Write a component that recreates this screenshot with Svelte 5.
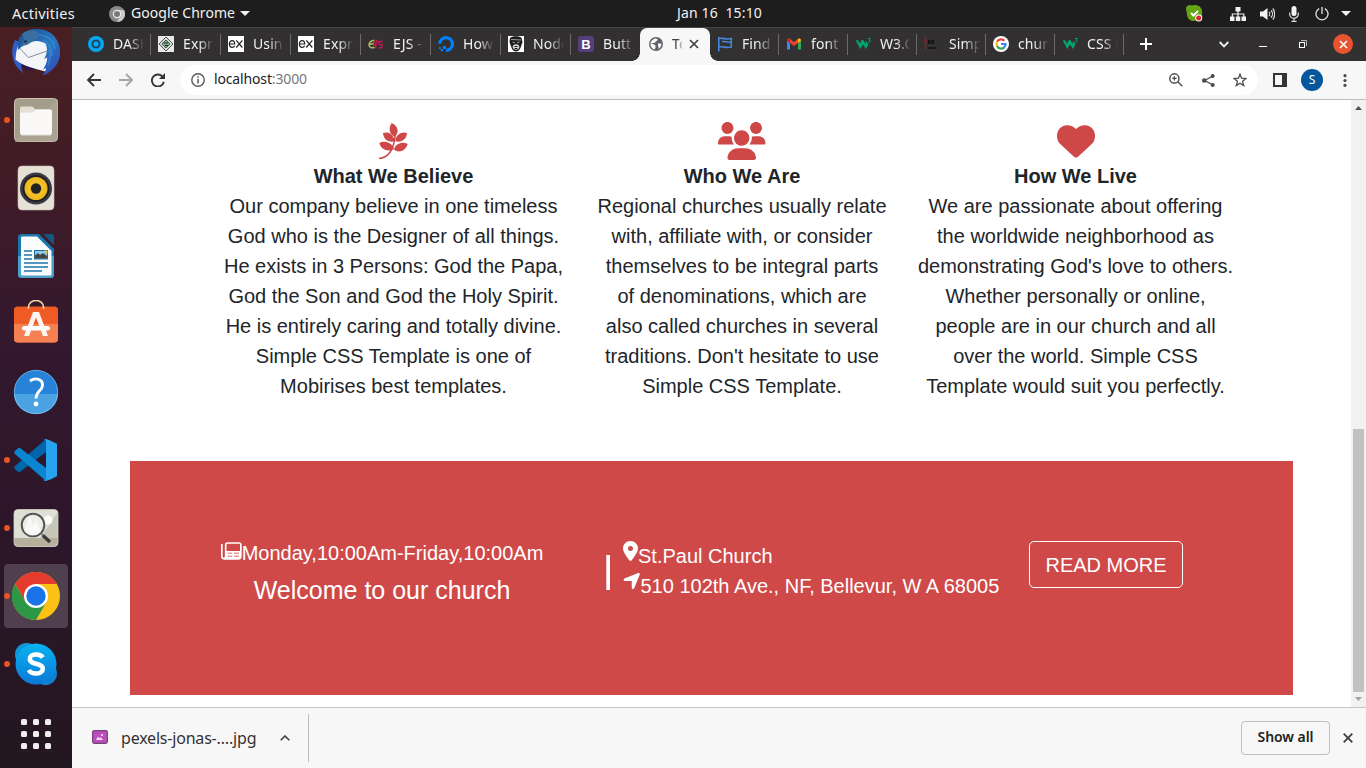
<script>
  const tabsLeft = [
    { icon: 'ring', label: 'DASH' },
    { icon: 'diamond', label: 'Expr' },
    { icon: 'ex', label: 'Usin' },
    { icon: 'ex', label: 'Expr' },
    { icon: 'ejs', label: 'EJS -' },
    { icon: 'ocean', label: 'How' },
    { icon: 'monkey', label: 'Node' },
    { icon: 'boot', label: 'Butt' }
  ];
  const tabsRight = [
    { icon: 'flag', label: 'Find' },
    { icon: 'gmail', label: 'font' },
    { icon: 'w3', label: 'W3.C' },
    { icon: 'simple', label: 'Simp' },
    { icon: 'google', label: 'chur' },
    { icon: 'w3', label: 'CSS L' }
  ];
  const dock = [
    { icon: 'thunderbird' },
    { icon: 'files', dot: true },
    { icon: 'rhythmbox' },
    { icon: 'writer' },
    { icon: 'software' },
    { icon: 'help' },
    { icon: 'code', dot: true },
    { icon: 'viewer', dot: true },
    { icon: 'chrome', dot: true, active: true },
    { icon: 'skype', dot: true }
  ];
  const columns = [
    {
      icon: 'leaf',
      title: 'What We Believe',
      lines: [
        'Our company believe in one timeless',
        'God who is the Designer of all things.',
        'He exists in 3 Persons: God the Papa,',
        'God the Son and God the Holy Spirit.',
        'He is entirely caring and totally divine.',
        'Simple CSS Template is one of',
        'Mobirises best templates.'
      ]
    },
    {
      icon: 'users',
      title: 'Who We Are',
      lines: [
        'Regional churches usually relate',
        'with, affiliate with, or consider',
        'themselves to be integral parts',
        'of denominations, which are',
        'also called churches in several',
        "traditions. Don't hesitate to use",
        'Simple CSS Template.'
      ]
    },
    {
      icon: 'heart',
      title: 'How We Live',
      lines: [
        'We are passionate about offering',
        'the worldwide neighborhood as',
        "demonstrating God's love to others.",
        'Whether personally or online,',
        'people are in our church and all',
        'over the world. Simple CSS',
        'Template would suit you perfectly.'
      ]
    }
  ];
</script>

{#snippet favicon(name)}
  <svg class="fav" viewBox="0 0 16 16" width="16" height="16">
    {#if name === 'ring'}
      <circle cx="8" cy="8" r="8" fill="#00a8f5" />
      <circle cx="8" cy="8" r="3.600" fill="none" stroke="#253b48" stroke-width="1.700" />
    {:else if name === 'diamond'}
      <rect width="16" height="16" fill="#e9e9e9" />
      <path d="M8 1L15 8L8 15L1 8Z" fill="#d5dcd6" stroke="#555" stroke-width="1" />
      <path d="M8 4L12 8L8 12L4 8Z" fill="#8fae96" stroke="#3c5c46" stroke-width="1" />
      <path d="M6 7h4M7 9.500h3" stroke="#223" stroke-width="1.100" />
    {:else if name === 'ex'}
      <rect width="16" height="16" fill="#fff" />
      <path d="M1.400 8h5.300c0-2.400-1-3.400-2.600-3.400S1.400 5.900 1.400 8s1 3.400 2.700 3.400c1.200 0 2.100-.6 2.500-1.700M8.300 4.400l6 7.100M14.400 4.400l-6.200 7.100" fill="none" stroke="#222" stroke-width="1.200" />
    {:else if name === 'ejs'}
      <path d="M6.500 4.500C3.500 4 1 6.500 1 8.700s2.500 4 5.500 2.600M1.500 8.500l4.500-1" fill="none" stroke="#a9bd5e" stroke-width="1.500" />
      <path d="M8.800 3.500L7.500 12.500M4.500 6.500l10-1.200M11.500 5.500l-.3 3 3 .4-.6 2.800-3.200.3M5 9l3-.5" fill="none" stroke="#c5174c" stroke-width="1.400" />
    {:else if name === 'ocean'}
      <path d="M8 14.400A6.400 6.400 0 1 0 1.700 7.700" fill="none" stroke="#0080ff" stroke-width="3.100" />
      <path d="M5 10h3v3H5zM2.800 13H5v2.200H2.800zM1 11h1.800v1.900H1z" fill="#0080ff" />
    {:else if name === 'monkey'}
      <rect width="16" height="16" fill="#fff" />
      <path d="M2 2C4-.5 12-.5 13.500 2L14.500 6L12.500 12C10.500 16.500 6 16.500 4 13L1.500 6Z" fill="#1b1b1b" />
      <ellipse cx="8" cy="11" rx="3.300" ry="2.800" fill="#d5d5d5" />
      <path d="M4.500 6.200l2.500.5M9 6.700l2.500-.5M3 3.500l10 .5" stroke="#aaa" stroke-width=".9" />
      <path d="M6.500 10.500h3M6.500 12.500h3" stroke="#222" />
    {:else if name === 'boot'}
      <rect width="16" height="16" rx="2.500" fill="#563d7c" />
      <text x="8" y="12.600" text-anchor="middle" font-family="Liberation Sans" font-weight="700" font-size="13" fill="#fff">B</text>
    {:else if name === 'flag'}
      <path d="M1.800 1v14.500M1.800 2.500c4-1 8 1.500 12.500 0v8.500C10 12.500 6 10 1.800 11M5 5.500c3-.5 5 1.500 9 .5" fill="none" stroke="#4387d8" stroke-width="1.600" />
    {:else if name === 'gmail'}
      <path d="M1 4v9.500h3V7.200z" fill="#4285f4" />
      <path d="M15 4v9.500h-3V7.200z" fill="#34a853" />
      <path d="M1 4.500C1 2.500 3 2 4.200 3L8 6l3.800-3C13 2 15 2.500 15 4.500L8 10z" fill="#ea4335" />
      <path d="M12 3l1-.6c1 0 2 .8 2 2.100L12 7z" fill="#fbbc04" />
      <path d="M1 4.500C1 3 2 2.300 3 2.500L4 3v4z" fill="#c5221f" />
    {:else if name === 'w3'}
      <path d="M.8 4.200h2.500l1.600 3.600 1.600-3.600h2.200l1.600 3.600L11.500 5 13.500 8.500 11 13 8 8.500 5.200 13z" fill="#04a56b" />
      <path d="M13 2.500h2.300l-1.300 1.600c2 0 1.600 2.500-.9 2.200" fill="none" stroke="#04a56b" stroke-width="1" />
    {:else if name === 'simple'}
      <path d="M1.500 1v13M0 5.200h3.500" stroke="#8f2029" stroke-width="1.300" />
      <path d="M4.500 4v4M6 4v4M8 4v4M9.500 4v4" stroke="#111" stroke-width="1.200" />
      <path d="M4 12h8" stroke="#151515" stroke-width="1.600" />
    {:else if name === 'google'}
      <circle cx="8" cy="8" r="8" fill="#fff" />
      <path d="M4 5.800A4.600 4.600 0 0 1 11.400 4.800" fill="none" stroke="#ea4335" stroke-width="2.200" />
      <path d="M4 10.200A4.600 4.600 0 0 1 4 5.800" fill="none" stroke="#fbbc05" stroke-width="2.200" />
      <path d="M11.200 11.400A4.600 4.600 0 0 1 4 10.100" fill="none" stroke="#34a853" stroke-width="2.200" />
      <path d="M8 8h4.600A4.600 4.600 0 0 1 11 11.500" fill="none" stroke="#4285f4" stroke-width="2.200" />
    {/if}
  </svg>
{/snippet}

{#snippet tab(t)}
  <div class="tab">
    {@render favicon(t.icon)}
    <span class="tab-label">{t.label}</span>
  </div>
{/snippet}

{#snippet dockIcon(name)}
  <svg viewBox="0 0 48 48" width="48" height="48">
    {#if name === 'thunderbird'}
      <defs>
        <linearGradient id="tb" x1="0" y1="0" x2="1" y2="1"><stop offset="0" stop-color="#1b4a8e" /><stop offset=".55" stop-color="#2879c2" /><stop offset="1" stop-color="#3440b4" /></linearGradient>
      </defs>
      <path d="M3 12C-2 22-1 37 12 45.500C9.500 42 9 40 9.500 37L14 40L12 30L8 14Z" fill="#2f5fc6" />
      <path d="M8 33l16 7c-2 2-6 2.500-9 1.500-3-1-6-4-7-8.500z" fill="#26124e" />
      <path d="M7 15C8 12 30 11 36 14C38 24 37 33 33.500 43.500C24 41 10 38 3.500 31.500C4 24 5 19 7 15Z" fill="#f3f4f8" />
      <path d="M6.500 19L16.500 29.500L35 23" fill="none" stroke="#858c98" stroke-width="1" />
      <path d="M9 7C17-1 34-1 42 8C49 16 50 28 45 36C41 42 36 46 30 47.500C33 44.500 34 42.500 34 40L31 41.500C34 37 35.500 33 35 29.500L32 31C35 26 36 21 33.500 15.500C28 12 20 12 15.500 16C11 17 9 19 6 22C5 17 6 11 9 7Z" fill="url(#tb)" />
      <path d="M10 6C18 0 26 1 27 7C26 12 20 13 15 17C12 17 10 19 8 19C12 14 13 10 10 6Z" fill="#3b6f9f" />
      <path d="M27 7c9 1 15 6 16 14M31 12c6 3 9 9 9 16M37 22c2 5 1 10-1 15" fill="none" stroke="#3c9bd8" stroke-width="1.600" opacity=".55" />
      <circle cx="13.500" cy="13.500" r="1.200" fill="#2c2018" />
    {:else if name === 'files'}
      <rect x="2.500" y="2.500" width="43" height="43" rx="4" fill="#a49d8b" stroke="#c9c3b3" />
      <path d="M2.500 46L46 2.500V41c0 3-2 4.500-4 4.500z" fill="#b2aa97" opacity=".5" />
      <path d="M8 12.500c0-1.500 1-2 2-2h10c2 0 2 3 4 3h14c1.500 0 2 1 2 2v21c0 2-1 3-2 3H10c-1 0-2-1-2-3z" fill="#e3dfd5" />
      <path d="M8 18.500c0-1.500 1-2 3-2h9c2 0 2.500-3 4.500-3H38c1.500 0 2 1 2 2v20c0 2-1 3-2 3H10c-1 0-2-1-2-3z" fill="#faf9f8" />
    {:else if name === 'rhythmbox'}
      <rect x="6" y="2" width="36" height="44" rx="4" fill="#e6e1d6" stroke="#c5bdac" stroke-width=".6" />
      <circle cx="24" cy="24.500" r="16" fill="#3a3a44" />
      <circle cx="24" cy="24.500" r="13.500" fill="#202024" />
      <circle cx="24" cy="24.500" r="11.500" fill="#edb820" />
      <circle cx="24" cy="24.500" r="9" fill="#f7ca34" opacity=".5" />
      <circle cx="24" cy="24.500" r="5.200" fill="#222225" />
    {:else if name === 'writer'}
      <path d="M6 6c0-3 1-4 4-4h17l15 15v25c0 3-1 4-4 4H10c-3 0-4-1-4-4z" fill="#1b76aa" />
      <path d="M6 24h36v18c0 3-1 4-4 4H10c-3 0-4-1-4-4z" fill="#4d9fc9" />
      <path d="M9 6c0-1 .5-1.500 1.500-1.500H25L39.500 19v23c0 1-.5 1.500-1.500 1.500H10.500c-1 0-1.500-.5-1.500-1.500z" fill="#fbfbfb" />
      <path d="M31 2h9c1.500 0 2 1 2 2v9z" fill="#115981" />
      <path d="M12 19h8M12 23h8M12 27h8M12 31h24M12 35h24M12 39h18" stroke="#1c77ab" stroke-width="1.700" />
      <rect x="22.500" y="18.500" width="13" height="8.500" fill="#8cc9ed" stroke="#1b6fa0" />
      <path d="M23 26.500v-3l3-2.500 2 2 3-2 4 3v2.500z" fill="#484541" /><path d="M32 18.500h3.500V22z" fill="#f2bf3a" />
    {:else if name === 'software'}
      <path d="M2 10c0-2 1-3.500 4-3.500h36c3 0 4 1.500 4 3.500v28c0 3-1 4.500-4 4.500H6c-3 0-4-1.500-4-4.500z" fill="#ef5b24" />
      <path d="M2 24h44v14c0 3-1 4.500-4 4.500H6c-3 0-4-1.500-4-4.500z" fill="#f58052" />
      <path d="M16.500 9V7a7.500 6.500 0 0 1 15 0v2" fill="none" stroke="#f4d3a4" stroke-width="1.600" />
      <path d="M21 12h6l9 24h-5l-7-18.500L17 36h-5z" fill="#fff" opacity=".93" />
      <rect x="10" y="26" width="28" height="4.500" rx="2.200" fill="#fff" />
    {:else if name === 'help'}
      <circle cx="24" cy="24" r="22" fill="#2783d7" />
      <path d="M2 26h44a22 20 0 0 1-44 0z" fill="#4ba2e2" />
      <circle cx="24" cy="24" r="21.700" fill="none" stroke="#8ecdf1" stroke-width=".6" />
      <path d="M18 13c5.500-4 13-2 12.500 4.500c-.5 5.500-6.500 5.500-6.500 13" fill="none" stroke="#fff" stroke-width="2.900" />
      <circle cx="24" cy="36" r="2.400" fill="#fff" />
    {:else if name === 'code'}
      <path d="M3 30L34 3v13L8 36c-1 .7-2 0-5-3-1-1-1-2 0-3z" fill="#0065a9" />
      <path d="M3 18L34 45V32L8 12c-1-.7-2 0-5 3-1 1-1 2 0 3z" fill="#0a86d1" />
      <path d="M34 3c1 0 10 4 11 5v32c-1 1-10 5-11 5-1 0-2-.5-3-1.500 2 1 3 .5 3-1.500V6c0-2-1-2.500-3-1.500C32 3.500 33 3 34 3z" fill="#27a3f0" />
    {:else if name === 'viewer'}
      <rect x="2" y="5.500" width="44" height="37" rx="4" fill="#e0dfd6" />
      <path d="M28 34L46 8v26z" fill="#c7c4b8" />
      <path d="M2 34h44v4.500c0 2.500-1 4-4 4H6c-3 0-4-1.500-4-4z" fill="#b4b09c" />
      <circle cx="36" cy="16" r="4.500" fill="#fafaf7" />
      <circle cx="21" cy="21" r="11.300" fill="#f0f0eb" fill-opacity=".9" stroke="#555" stroke-width="2" />
      <path d="M12 27l6-15 3 9 3-5 5 12a11 11 0 0 1-17-1z" fill="#fff" opacity=".6" />
      <path d="M29.500 30l3 3" stroke="#777" stroke-width="2" /><path d="M31 31.500l7 6.500" stroke="#3a3a3a" stroke-width="3.300" />
      <rect x="2" y="5.500" width="44" height="37" rx="4" fill="none" stroke="#d3d0c6" stroke-width=".8" />
    {:else if name === 'chrome'}
      <circle cx="24" cy="24" r="24" fill="#fbc116" />
      <path d="M24 12H44.800A24 24 0 0 0 3.200 12L13.600 30z" fill="#e33b2e" />
      <path d="M34.400 30L24 48A24 24 0 0 1 3.200 12L13.600 30z" fill="#2b9747" />
      <circle cx="24" cy="24" r="12" fill="#fff" />
      <circle cx="24" cy="24" r="9.700" fill="#1a73e8" />
    {:else if name === 'skype'}
      <defs><linearGradient id="sk" x1="0" y1="0" x2="0" y2="1"><stop offset="0" stop-color="#08b3f2" /><stop offset="1" stop-color="#0b78d7" /></linearGradient></defs>
      <circle cx="14.500" cy="14.500" r="11.500" fill="#1295d8" />
      <circle cx="33.500" cy="33.500" r="11.500" fill="#0f7fce" />
      <circle cx="24" cy="24" r="20.500" fill="url(#sk)" />
      <path d="M30.800 17.500C28.500 13.500 17.800 13 17.800 19c0 6 13 3.500 13 9.800c0 6-11.500 6-14 1.200" fill="none" stroke="#fff" stroke-width="4.600" />
    {/if}
  </svg>
{/snippet}

<div class="desktop">
  <header class="topbar">
    <span class="activities">Activities</span>
    <svg class="app-ic" width="16" height="16" viewBox="0 0 16 16"><circle cx="8" cy="8" r="8" fill="#8a8a8a" /><path d="M8 4h7A8 8 0 0 1 8 16l3.500-6z" fill="#c9c9c9" /><circle cx="8" cy="8" r="4.200" fill="#eee" /><circle cx="8" cy="8" r="3" fill="#777" /></svg>
    <span class="app-name">Google Chrome</span>
    <svg class="tri" width="10" height="5" viewBox="0 0 10 5"><path d="M0 0h10L5 5z" fill="#f2f2f2" /></svg>
    <span class="clock">Jan 16&nbsp; 15:10</span>
    <div class="tray">
      <svg width="17" height="17" viewBox="0 0 17 17"><path d="M0 4C0 1 2 0 4 0c2 1 3 0 5 0c5 0 8 4 7 9c1 4-1 7-4 7c-2-1-3 0-5 0c-4 0-6-4-6-7z" fill="#65a515" /><path d="M5 8l2.500 2.500L12 6" fill="none" stroke="#fff" stroke-width="2" /><circle cx="12.700" cy="13" r="3.500" fill="#fff" /><circle cx="12.700" cy="13" r="2.500" fill="#e0202a" /></svg>
      <svg class="t2" width="16" height="14" viewBox="0 0 16 14"><path d="M5.500 0h5v4.500h-5zM0 9.500h4.500V14H0zM5.800 9.500h4.500V14H5.800zM11.500 9.500H16V14h-4.500z" fill="#f2f2f2" /><path d="M8 4v6M2.300 10V7h11.500v3" fill="none" stroke="#f2f2f2" stroke-width="1.200" /></svg>
      <svg class="t3" width="15" height="14" viewBox="0 0 15 14"><path d="M0 4.500h3L7.500 1v12L3 9.500H0z" fill="#f2f2f2" /><path d="M9 5c1 1 1 3 0 4M11 3.500c2 2 2 5 0 7M12.800 1.500c2.500 3 2.500 8 0 11" fill="none" stroke="#ddd" stroke-width="1.200" /></svg>
      <svg class="t4" width="10" height="16" viewBox="0 0 10 16"><rect x="2.500" y="0" width="5" height="10" rx="2.500" fill="#f2f2f2" /><path d="M.7 6.500v1.500a4.300 4.300 0 0 0 8.600 0V6.500M5 12v3M2.500 15.400h5" fill="none" stroke="#ddd" stroke-width="1.200" /></svg>
      <svg class="t5" width="14" height="14" viewBox="0 0 14 14"><path d="M4.200 1.600a6 6 0 1 0 5.600 0M7 0v7" fill="none" stroke="#e6e6e6" stroke-width="1.300" /></svg>
      <svg class="t6" width="10" height="5" viewBox="0 0 10 5"><path d="M0 0h10L5 5z" fill="#f2f2f2" /></svg>
    </div>
  </header>

  <div class="body">
    <nav class="dock">
      {#each dock as d}
        <div class="dock-cell" class:active={d.active}>
          {#if d.dot}<i class="dot"></i>{/if}
          {@render dockIcon(d.icon)}
        </div>
      {/each}
      <div class="grid-dots">
        {#each Array(9) as _}<i></i>{/each}
      </div>
    </nav>

    <main class="window">
      <div class="tabstrip">
        <div class="tabs left">{#each tabsLeft as t}{@render tab(t)}{/each}</div>
        <div class="tab-active">
          <svg width="14" height="14" viewBox="0 0 14 14"><circle cx="7" cy="7" r="7" fill="#5f6368" /><path d="M7 1.500c2 .5 2 1.500 1 2.200C6.500 4 7 5.500 5 6H2c2 1 3.500 1.500 4.500 2.500V11c-1 1-1 1.500 0 1.500C3 12.300 1.500 9.500 1.500 7 1.500 4 4 1.500 7 1.500zM9 6.500h3.500c0 3-1.500 4.500-3 5.500.5-1.500 0-2.500-.5-3z" fill="#f7f7f7" /></svg>
          <span class="tab-label">Te</span>
          <svg class="x" width="10" height="10" viewBox="0 0 10 10"><path d="M1 1l8 8M9 1L1 9" stroke="#3c4043" stroke-width="1.700" /></svg>
        </div>
        <div class="tabs right">{#each tabsRight as t}{@render tab(t)}{/each}</div>
        <svg class="plus" width="12" height="12" viewBox="0 0 12 12"><path d="M6 0v12M0 6h12" stroke="#fff" stroke-width="2" /></svg>
        <div class="winctl">
          <svg width="10" height="7" viewBox="0 0 10 7"><path d="M.7 1l4.300 4.300L9.300 1" fill="none" stroke="#eee" stroke-width="1.900" /></svg>
          <svg class="min" width="8" height="2" viewBox="0 0 8 2"><path d="M0 .5h8" stroke="#fff" /></svg>
          <svg class="res" width="8" height="8" viewBox="0 0 8 8"><path d="M2 .5h5.500V6" fill="none" stroke="#bbb" /><rect x=".5" y="2.500" width="5" height="5" fill="none" stroke="#fff" /></svg>
          <span class="close"><svg width="9" height="9" viewBox="0 0 9 9"><path d="M1 1l7 7M8 1L1 8" stroke="#fff" stroke-width="1.500" /></svg></span>
        </div>
      </div>

      <div class="toolbar">
        <svg class="back" width="16" height="14" viewBox="0 0 16 14"><path d="M8 1L2 7l6 6M2 7h13" fill="none" stroke="#333538" stroke-width="1.900" /></svg>
        <svg class="fwd" width="16" height="14" viewBox="0 0 16 14"><path d="M8 1l6 6-6 6M14 7H1" fill="none" stroke="#a5a5a5" stroke-width="1.900" /></svg>
        <svg class="reload" width="14" height="14" viewBox="0 0 14 14"><path d="M12 4.300A6 6 0 1 0 12.800 8.700" fill="none" stroke="#333538" stroke-width="1.900" /><path d="M14 0v6H8z" fill="#333538" /></svg>
        <div class="omnibox">
          <svg width="14" height="14" viewBox="0 0 14 14"><circle cx="7" cy="7" r="6.200" fill="none" stroke="#55585c" stroke-width="1.400" /><path d="M7 6v4.500M7 3.300v1.500" stroke="#55585c" stroke-width="1.500" /></svg>
          <span class="url">localhost<span>:3000</span></span>
          <svg class="o1" width="14" height="14" viewBox="0 0 14 14"><circle cx="5.400" cy="5.400" r="4.600" fill="none" stroke="#46494d" stroke-width="1.400" /><path d="M8.800 8.800l4.500 4.500M3.300 5.400h4.200M5.400 3.300v4.200" stroke="#46494d" stroke-width="1.300" /></svg>
          <svg class="o2" width="13" height="13" viewBox="0 0 13 13"><path d="M10.500 2.200L2.500 6.500l8 4.300" fill="none" stroke="#46494d" stroke-width="1.300" /><g fill="#46494d"><circle cx="10.700" cy="2" r="2" /><circle cx="2.200" cy="6.500" r="2.200" /><circle cx="10.700" cy="11" r="2" /></g></svg>
          <svg class="o3" width="14" height="14" viewBox="0 0 14 14"><path d="M7 1.200l1.600 4 4.400.3-3.400 2.800 1.100 4.300L7 10.200l-3.700 2.400 1.100-4.300L1 5.500l4.400-.3z" fill="none" stroke="#46494d" stroke-width="1.300" /></svg>
        </div>
        <svg class="side" width="14" height="14" viewBox="0 0 14 14"><path d="M0 0h14v14H0zM2 2v10h7V2z" fill="#333538" fill-rule="evenodd" /></svg>
        <span class="avatar">S</span>
        <svg class="kebab" width="4" height="13" viewBox="0 0 4 13"><g fill="#46494d"><circle cx="2" cy="1.700" r="1.600" /><circle cx="2" cy="6.500" r="1.600" /><circle cx="2" cy="11.300" r="1.600" /></g></svg>
      </div>

      <div class="viewport">
        <div class="page">
          <section class="columns">
            {#each columns as c}
              <article>
                <div class="col-icon">
                  {#if c.icon === 'leaf'}
                    <svg class="leaf" width="28.700" height="36.700" viewBox="118 38 86 110" fill="#cf4848"><path d="M156 38C145 54 149 72 165 79C179 68 177 47 156 38Z" /><path d="M130 68C143 63 161 68 165 93C146 98 132 88 130 69Z" /><path d="M202 68C188 63 168 70 167 93C186 98 201 86 202 68Z" /><path d="M119 98C132 91 156 93 163 117C142 125 124 117 119 98Z" /><path d="M204 101C190 93 168 98 163 117C172 128 198 125 204 101Z" /><path d="M118 144.500C145 143 163 120 167 70" fill="none" stroke="#cf4848" stroke-width="4.500" /></svg>
                  {:else if c.icon === 'users'}
                    <svg width="47.500" height="38" viewBox="0 0 640 512" fill="#cf4848"><path d="M319.900 320c57.410 0 103.100-46.560 103.100-104c0-57.440-46.540-104-103.100-104c-57.410 0-103.100 46.560-103.100 104C215.900 273.400 262.500 320 319.900 320zM369.900 352H270.100C191.600 352 128 411.700 128 485.300C128 500.100 140.700 512 156.400 512h327.200C499.300 512 512 500.100 512 485.300C512 411.700 448.400 352 369.900 352zM512 160c44.180 0 80-35.820 80-80S556.200 0 512 0c-44.180 0-80 35.820-80 80S467.800 160 512 160zM183.900 216c0-5.449 .9824-10.630 1.609-15.910C174.600 194.100 162.600 192 149.900 192H88.080C39.440 192 0 233.800 0 285.300C0 295.600 7.887 304 17.620 304h199.500C196.700 280.200 183.900 249.700 183.900 216zM128 160c44.180 0 80-35.820 80-80S172.200 0 128 0C83.820 0 48 35.820 48 80S83.820 160 128 160zM551.900 192h-61.840c-12.800 0-24.880 3.037-35.860 8.240C454.800 205.500 455.800 210.600 455.800 216c0 33.710-12.780 64.210-33.160 88h199.700C632.100 304 640 295.600 640 285.300C640 233.800 600.600 192 551.900 192z" /></svg>
                  {:else}
                    <svg width="38" height="38" viewBox="0 0 512 512" fill="#cf4848"><path d="M0 190.900V185.100C0 115.200 50.520 55.580 119.400 44.100C164.100 36.510 211.400 51.370 244 84.020L256 96L267.100 84.020C300.600 51.370 347 36.510 392.600 44.100C461.500 55.580 512 115.200 512 185.100V190.900C512 232.400 494.800 272.100 464.400 300.400L283.700 469.100C276.200 476.100 266.300 480 256 480C245.700 480 235.800 476.100 228.300 469.100L47.590 300.400C17.230 272.100 0 232.400 0 190.900z" /></svg>
                  {/if}
                </div>
                <h3>{c.title}</h3>
                {#each c.lines as line}<p>{line}</p>{/each}
              </article>
            {/each}
          </section>

          <section class="banner">
            <div class="hours">
              <div class="row">
                <svg width="20.700" height="18" viewBox="0 0 62 54"><path d="M2.500 8V43c0 5 3 7.500 7 7.500H52c5 0 7.500-2.500 7.500-7V9c0-4-2-6-6-6H20c-4 0-6 2-6 6v34c0 4-2 6-5 6" fill="none" stroke="#fff" stroke-width="5" stroke-linecap="round" /><path d="M15 27H59V50H9L15 44z" fill="#fff" /><path d="M20 33.500h14M39 33.500h15M20 42.500h14M39 42.500h15" stroke="#d66a6a" stroke-width="3" /></svg>
                <span>Monday,10:00Am-Friday,10:00Am</span>
              </div>
              <div class="welcome">Welcome to our church</div>
            </div>
            <div class="rule"></div>
            <div class="place">
              <div class="row">
                <svg width="15" height="20" viewBox="0 0 384 512" fill="#fff"><path d="M215.700 499.200C267 435 384 279.400 384 192C384 86 298 0 192 0S0 86 0 192c0 87.400 117 243 168.300 307.200c12.300 15.300 35.100 15.300 47.400 0zM192 128a64 64 0 1 1 0 128 64 64 0 1 1 0-128z" /></svg>
                <span>St.Paul Church</span>
              </div>
              <div class="row">
                <svg width="17.500" height="20" viewBox="0 0 448 512" fill="#fff"><path d="M429.600 92.100c4.900-11.900 2.100-25.600-7-34.700s-22.800-11.900-34.700-7l-352 144c-14.200 5.800-22.200 20.800-19.300 35.800s16.100 25.800 31.400 25.800H224V432c0 15.300 10.800 28.400 25.800 31.400s30-5.100 35.800-19.300l144-352z" /></svg>
                <span>510 102th Ave., NF, Bellevur, W A 68005</span>
              </div>
            </div>
            <button>READ MORE</button>
          </section>
        </div>
        <div class="scrollbar">
          <svg width="7" height="4" viewBox="0 0 7 4"><path d="M0 4h7L3.500 0z" fill="#505050" /></svg>
          <div class="thumb"></div>
          <svg class="down" width="7" height="4" viewBox="0 0 7 4"><path d="M0 0h7L3.500 4z" fill="#a3a3a3" /></svg>
        </div>
      </div>

      <footer class="downloads">
        <div class="item">
          <svg width="16" height="14" viewBox="0 0 16 14"><rect x=".6" y=".6" width="14.800" height="12.800" rx="1.800" fill="#bd4cbc" stroke="#714575" stroke-width="1.200" /><path d="M4 10l2-3.500 1.500 2 1-1.500L11 10z" fill="#fff" opacity=".8" /><rect x="9" y="4" width="2" height="2" fill="#fff" opacity=".7" /></svg>
          <span class="fname">pexels-jonas-….jpg</span>
          <svg class="chev" width="10" height="6" viewBox="0 0 10 6"><path d="M.7 5.300L5 1l4.300 4.300" fill="none" stroke="#3c4043" stroke-width="1.600" /></svg>
        </div>
        <div class="showall">Show all</div>
        <svg class="dx" width="10" height="10" viewBox="0 0 10 10"><path d="M.7.7l8.600 8.600M9.300.7L.7 9.300" stroke="#3c4043" stroke-width="1.800" /></svg>
      </footer>
    </main>
  </div>
</div>

<style>
  :global(body) { margin: 0; overflow: hidden; }
  .desktop { width: 1366px; height: 768px; display: flex; flex-direction: column; overflow: hidden; font-family: "Noto Sans", sans-serif; box-sizing: border-box; }
  .desktop :global(*) { box-sizing: border-box; }
  svg { display: block; flex: none; }
  .topbar { height: 27px; flex: none; background: #1d1d1d; color: #f2f2f2; display: flex; align-items: center; font-size: 14px; white-space: nowrap; }
  .topbar span { line-height: 20px; padding-bottom: 1px; }
  .activities { margin-left: 12px; width: 97px; font-size: 14.500px; letter-spacing: .25px; }
  .app-name { margin-left: 6px; width: 104px; letter-spacing: .05px; }
  .tri { margin-left: 5px; }
  .clock { width: 86px; margin-left: 427px; letter-spacing: .15px; }
  .tray { margin-left: 423px; display: flex; align-items: center; }
  .t2 { margin-left: 27px; } .t3 { margin-left: 14px; } .t4 { margin-left: 14px; } .t5 { margin-left: 16px; } .t6 { margin-left: 12px; }
  .body { display: flex; flex: 1; min-height: 0; }
  .dock { width: 72px; flex: none; overflow: hidden; background: linear-gradient(#4a1f22, #3e1b28 25%, #33182e 42%, #2c162a 70%, #23171f); display: flex; flex-direction: column; }
  .dock-cell { height: 64px; margin: 0 4px 4px; flex: none; display: flex; align-items: center; justify-content: center; position: relative; border-radius: 4px; }
  .dock-cell:first-child { margin-top: -7px; }
  .dock-cell.active { background: #50404f; }
  .dot { position: absolute; left: 0; top: 29px; width: 6px; height: 6px; border-radius: 50%; background: #e95420; }
  .grid-dots { display: grid; grid-template-columns: repeat(3, 6px); gap: 6px; margin: 19px auto 0; }
  .grid-dots i { width: 6px; height: 6px; border-radius: 1.500px; background: #f0eeec; }
  .window { flex: 1; min-width: 0; display: flex; flex-direction: column; background: #fff; }
  .tabstrip { height: 34px; flex: none; background: #333031; border-top: 1px solid #454344; display: flex; align-items: center; padding-left: 9px; }
  .tabs { display: flex; height: 33px; align-items: center; }
  .tab { display: flex; align-items: center; padding-left: 7px; height: 21px; border-right: 1px solid #6b696a; width: 70px; }
  .fav { margin-top: -1px; }
  .left .tab:last-child { border-right-color: transparent; width: 69px; }
  .right .tab { width: 69px; }
  .tab-label { font-size: 14px; line-height: 20px; padding-bottom: 1px; color: #f1f1f1; margin-left: 9px; width: 31px; overflow: hidden; white-space: nowrap; letter-spacing: .1px; -webkit-mask-image: linear-gradient(90deg, #000 50%, transparent); mask-image: linear-gradient(90deg, #000 50%, transparent); }
  .tab-active { width: 70px; height: 33px; background: #f7f7f7; border-radius: 7px 7px 0 0; display: flex; align-items: center; padding-left: 9px; position: relative; }
  .tab-active svg { margin-top: -1px; }
  .tab-active::before, .tab-active::after { content: ""; position: absolute; bottom: 0; width: 8px; height: 8px; }
  .tab-active::before { left: -8px; background: radial-gradient(circle at 0 0, transparent 7.500px, #f7f7f7 8px); }
  .tab-active::after { right: -8px; background: radial-gradient(circle at 100% 0, transparent 7.500px, #f7f7f7 8px); }
  .tab-active .tab-label { color: #3c4043; width: 11px; }
  .tab-active .x { margin-left: 6px; }
  .plus { margin: -1px 0 0 16px; }
  .winctl { margin: -1px 0 0 67px; display: flex; align-items: center; }
  .min { margin: 5px 0 0 30px; } .res { margin-left: 32px; }
  .close { margin-left: 26px; width: 20px; height: 20px; border-radius: 50%; background: #e95430; display: flex; align-items: center; justify-content: center; }
  .toolbar { height: 39px; flex: none; background: #f7f7f7; border-bottom: 1px solid #bdbdbd; display: flex; align-items: center; }
  .back { margin-left: 14px; } .fwd { margin-left: 16px; } .reload { margin-left: 17px; }
  .omnibox { margin-left: 15px; width: 1078px; height: 30px; border-radius: 15px; background: #fff; display: flex; align-items: center; padding-left: 11px; }
  .url { margin-left: 9px; width: 100px; font-size: 14px; line-height: 20px; padding-bottom: 2px; letter-spacing: -.15px; color: #222; }
  .url span { color: #777; }
  .o1 { margin-left: 855px; } .o2 { margin-left: 19px; } .o3 { margin-left: 18px; }
  .side { margin-left: 15px; }
  .avatar { margin-left: 14px; width: 22px; height: 22px; border-radius: 50%; background: #04579b; color: #fff; font-size: 12px; line-height: 22px; text-align: center; }
  .kebab { margin-left: 20px; }
  .viewport { flex: 1; display: flex; min-height: 0; }
  .page { flex: 1; padding: 22px 58px 0; font-family: "Liberation Sans", Arial, sans-serif; font-size: 20px; line-height: 30px; color: #212529; }
  .columns { display: grid; grid-template-columns: 351px 346px 321px; padding-left: 88px; text-align: center; white-space: nowrap; }
  .col-icon { height: 39px; display: flex; justify-content: center; align-items: flex-start; }
  .leaf { margin-top: 1px; }
  h3 { margin: 0; font-size: 20px; line-height: 30px; }
  p { margin: 0; }
  .banner { margin-top: 60px; width: 1163px; height: 234px; background: #cf4949; color: #fff; display: flex; align-items: flex-start; white-space: nowrap; }
  .row { display: flex; height: 30px; }
  .hours { margin: 77px 0 0 91px; width: 322px; }
  .hours .row svg { margin-top: 3.500px; }
  .welcome { font-size: 25px; line-height: 38px; margin-top: 3px; text-align: center; }
  .rule { margin: 94px 0 0 63px; width: 4px; height: 35px; background: linear-gradient(90deg, #f3c9d3 1px, #fff 1px); }
  .place { margin: 80px 0 0 13px; width: 377px; }
  button { margin: 80px 0 0 29px; width: 154px; height: 47px; border: 1px solid #fff; border-radius: 5px; background: transparent; color: #fff; font: 20px "Liberation Sans", Arial, sans-serif; padding: 2px 0 0; }
  .scrollbar { width: 15px; background: #f1f1f1; display: flex; flex-direction: column; align-items: center; padding-top: 6px; }
  .thumb { width: 11px; height: 263px; margin-top: 319px; background: #c1c1c1; }
  .down { margin-top: 5px; }
  .downloads { height: 61px; flex: none; background: #f7f7f7; border-top: 1px solid #c3c3c3; display: flex; align-items: center; }
  .item { width: 237px; height: 48px; border-right: 1px solid #bcbcbc; display: flex; align-items: center; padding-left: 20px; }
  .item > svg { margin-top: -2px; }
  .fname { margin-left: 13px; width: 136px; font-size: 16px; letter-spacing: -.2px; color: #333; white-space: nowrap; }
  .item > .chev { margin: 0 0 0 23px; }
  .showall { margin-left: 932px; width: 89px; height: 34px; border: 1px solid #bfbfbf; border-radius: 4px; font-size: 14px; font-weight: 600; color: #222; text-align: center; line-height: 30px; letter-spacing: -.05px; }
  .dx { margin-left: 13px; }
</style>
